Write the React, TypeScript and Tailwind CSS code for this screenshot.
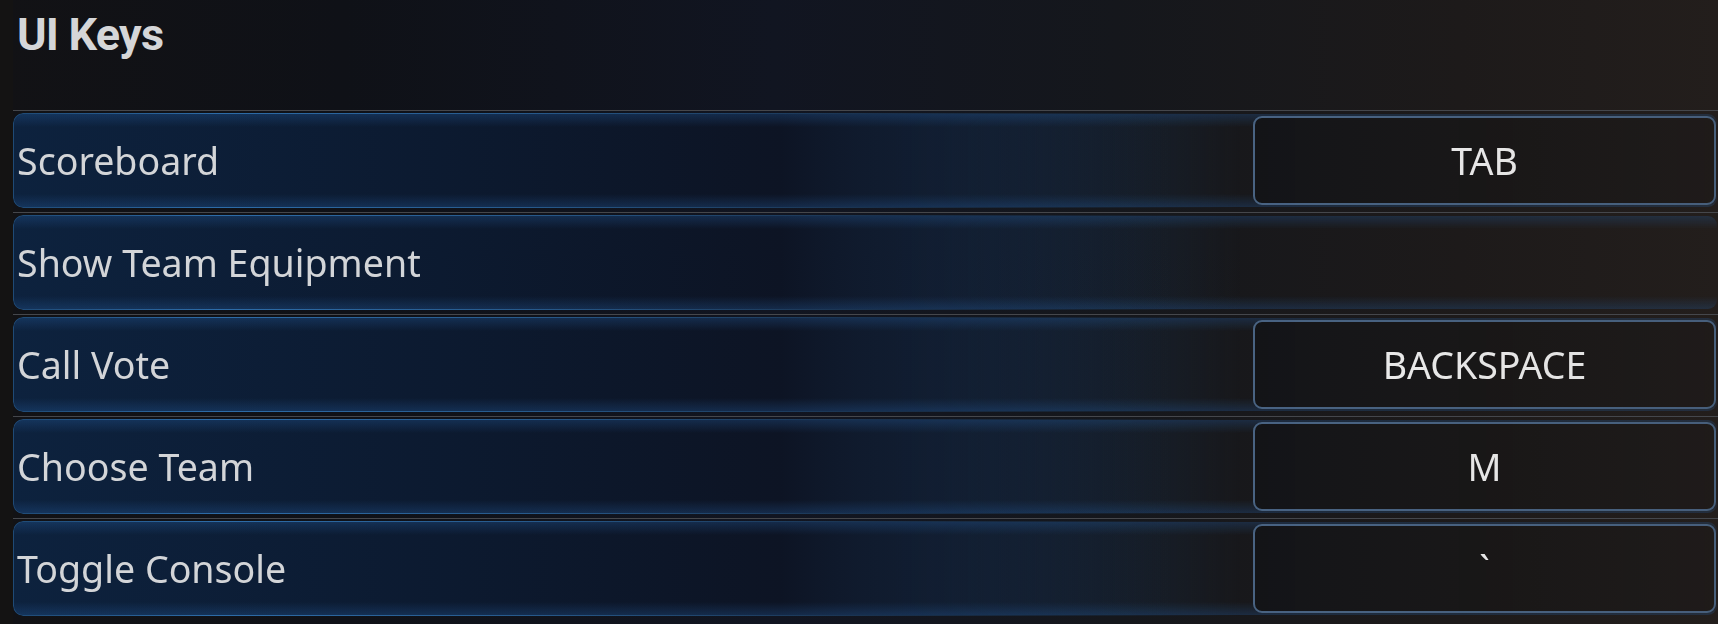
import React from "react";

const rows: { label: string; key?: string }[] = [
  { label: "Scoreboard", key: "TAB" },
  { label: "Show Team Equipment" },
  { label: "Call Vote", key: "BACKSPACE" },
  { label: "Choose Team", key: "M" },
  { label: "Toggle Console", key: "`" },
];

export default function App() {
  return (
    <div
      className="w-[1718px] h-[624px] overflow-hidden flex bg-[linear-gradient(90deg,#121215_0%,#0f1117_20%,#111521_45%,#15171c_65%,#1d1a1a_85%,#231e1c_100%)]"
      style={{ fontFamily: '"Noto Sans", "Open Sans", sans-serif' }}
    >
      <div className="w-[13px] shrink-0 bg-[#141313]" />
      <div className="flex-1 flex flex-col">
        <div className="h-[110px] pl-[4px] pt-[12px]">
          <h1
            className="text-[45px] leading-none font-bold text-[#d5d6d8] tracking-[-0.8px]"
            style={{ fontFamily: 'Roboto, "Liberation Sans", sans-serif' }}
          >
            UI Keys
          </h1>
        </div>
        {rows.map((r) => (
          <div key={r.label} className="h-[102px] border-t border-[#45474c] pt-[2px]">
            <div className="h-[95px] rounded-[10px] border border-transparent flex items-center [background:linear-gradient(180deg,rgba(40,100,170,0.28)_0%,rgba(40,100,170,0)_14%,rgba(40,100,170,0)_86%,rgba(40,100,170,0.28)_100%)_padding-box,linear-gradient(90deg,#0d223e_0%,#0c1a30_25%,#0d1424_45%,rgba(15,17,23,0)_68%)_padding-box,linear-gradient(90deg,#1f4a75_0%,#2d6ca8_12%,#275a8c_30%,#1a3350_50%,rgba(30,40,55,0)_72%)_border-box] [mask-image:linear-gradient(90deg,#000_0%,#000_60%,rgba(0,0,0,0.9)_100%)]">
              <span className="pl-[3px] text-[37.6px] leading-none text-[#d3d5d8]">{r.label}</span>
              {r.key && (
                <div className="ml-auto mr-[1px] w-[463px] h-[89px] rounded-[9px] border-2 border-[#4b6686] bg-[linear-gradient(90deg,#141518,#1a1818_60%,#1f1b1a)] flex items-center justify-center">
                  <span className="text-[37.5px] leading-none text-[#f4f4f4]">{r.key}</span>
                </div>
              )}
            </div>
          </div>
        ))}
      </div>
    </div>
  );
}
